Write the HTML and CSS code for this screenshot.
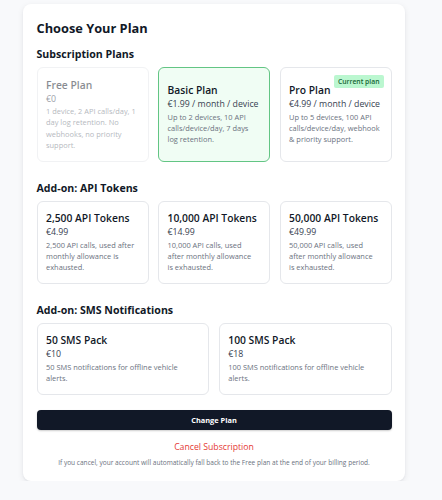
FILE: index.html
```html
<!DOCTYPE html>
<html lang="en">
<head>
<meta charset="utf-8">
<title>Choose Your Plan</title>
<link rel="stylesheet" href="styles.css">
</head>
<body>
<div class="modal">
  <h1 class="title">Choose Your Plan</h1>

  <section class="section">
    <h2 class="section-title">Subscription Plans</h2>
    <div class="grid grid-3">
      <div class="card plan disabled">
        <div class="name">Free Plan</div>
        <div class="price">€0</div>
        <div class="desc">1 device, 2 API calls/day, 1 day log retention. No webhooks, no priority support.</div>
      </div>
      <div class="card plan selected">
        <div class="name">Basic Plan</div>
        <div class="price">€1.99 / month / device</div>
        <div class="desc">Up to 2 devices, 10 API calls/device/day, 7 days log retention.</div>
      </div>
      <div class="card plan">
        <span class="badge">Current plan</span>
        <div class="name">Pro Plan</div>
        <div class="price">€4.99 / month / device</div>
        <div class="desc">Up to 5 devices, 100 API calls/device/day, webhook &amp; priority support.</div>
      </div>
    </div>
  </section>

  <section class="section">
    <h2 class="section-title">Add-on: API Tokens</h2>
    <div class="grid grid-3">
      <div class="card addon">
        <div class="name">2,500 API Tokens</div>
        <div class="price">€4.99</div>
        <div class="desc">2,500 API calls, used after monthly allowance is exhausted.</div>
      </div>
      <div class="card addon">
        <div class="name">10,000 API Tokens</div>
        <div class="price">€14.99</div>
        <div class="desc">10,000 API calls, used after monthly allowance is exhausted.</div>
      </div>
      <div class="card addon">
        <div class="name">50,000 API Tokens</div>
        <div class="price">€49.99</div>
        <div class="desc">50,000 API calls, used after monthly allowance is exhausted.</div>
      </div>
    </div>
  </section>

  <section class="section">
    <h2 class="section-title">Add-on: SMS Notifications</h2>
    <div class="grid grid-2">
      <div class="card addon">
        <div class="name">50 SMS Pack</div>
        <div class="price">€10</div>
        <div class="desc">50 SMS notifications for offline vehicle alerts.</div>
      </div>
      <div class="card addon">
        <div class="name">100 SMS Pack</div>
        <div class="price">€18</div>
        <div class="desc">100 SMS notifications for offline vehicle alerts.</div>
      </div>
    </div>
  </section>

  <button class="primary">Change Plan</button>
  <div class="cancel">Cancel Subscription</div>
  <p class="note">If you cancel, your account will automatically fall back to the Free plan at the end of your billing period.</p>
</div>
</body>
</html>
```

FILE: styles.css
```css
* { box-sizing: border-box; }

html, body {
  margin: 0;
  padding: 0;
  background: #f8f9fb;
}

body {
  font-family: "Open Sans", "Noto Sans", sans-serif;
  color: #111827;
  padding: 4px 0 0 23px;
}

.modal {
  width: 382px;
  background: #ffffff;
  border-radius: 8px;
  box-shadow: 0 2px 6px rgba(15, 23, 42, 0.08), 0 1px 2px rgba(15, 23, 42, 0.05);
  padding: 14.5px 13.5px 14px;
}

.title {
  margin: 0 0 10px;
  font-size: 12.8px;
  line-height: 18px;
  font-weight: 700;
}

.section { margin-bottom: 19px; }
.section:last-of-type { margin-bottom: 15px; }

.section-title {
  margin: 0 0 6px;
  font-size: 10.6px;
  line-height: 14px;
  font-weight: 700;
}

.grid {
  display: grid;
  gap: 9.5px;
}
.grid-3 { grid-template-columns: repeat(3, 1fr); }
.grid-2 { grid-template-columns: repeat(2, 1fr); }

.card {
  position: relative;
  border: 1px solid #e5e7eb;
  border-radius: 6px;
  background: #ffffff;
  padding: 10px 8.5px;
  display: flex;
  flex-direction: column;
  justify-content: center;
}

.card.addon {
  padding: 9px 12px 9.5px 8.5px;
}

.card.selected {
  background: #f0fdf4;
  border-color: #63c584;
}

.card.disabled { opacity: 0.5; }

.name {
  font-size: 10.3px;
  line-height: 14px;
  font-weight: 600;
  color: #111827;
  margin-bottom: 1px;
}

.price {
  font-size: 8.75px;
  line-height: 12px;
  color: #374151;
  margin-bottom: 1.5px;
}

.desc {
  font-size: 7.45px;
  line-height: 11.33px;
  color: #6b7280;
}

.badge {
  position: absolute;
  top: 7px;
  right: 7px;
  height: 13px;
  padding: 0 4px;
  border-radius: 2px;
  background: #bbf7d0;
  color: #166534;
  font-size: 6.8px;
  line-height: 13px;
  font-weight: 600;
}

.primary {
  display: block;
  width: 100%;
  height: 20.5px;
  border: none;
  border-radius: 4px;
  background: #111827;
  color: #ffffff;
  font-family: inherit;
  font-size: 7.4px;
  font-weight: 700;
  line-height: 20.5px;
  padding: 0;
  box-shadow: 0 1px 2px rgba(0, 0, 0, 0.2);
}

.cancel {
  margin-top: 9.5px;
  text-align: center;
  color: #e53935;
  font-size: 8.7px;
  line-height: 14px;
}

.note {
  margin: 3.8px 0 0;
  text-align: center;
  color: #6b7280;
  font-size: 6.55px;
  line-height: 9px;
}
```
